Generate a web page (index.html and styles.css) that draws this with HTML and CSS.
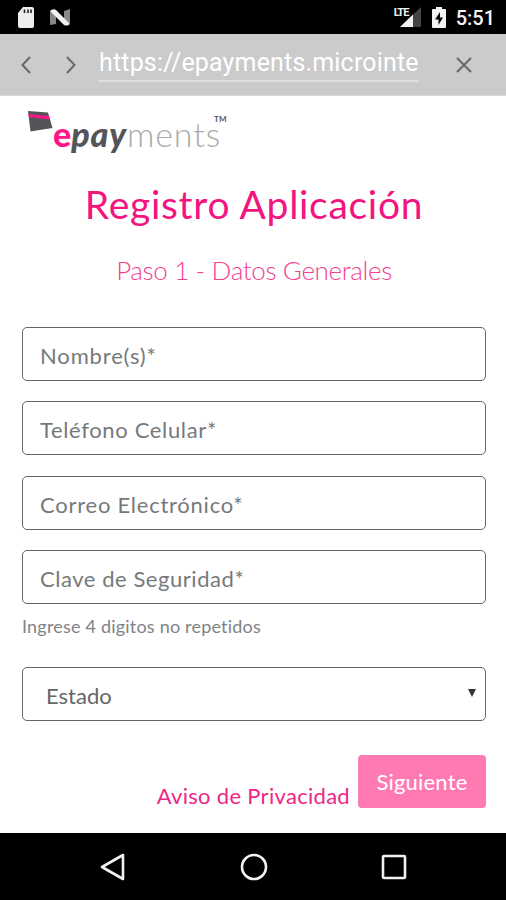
FILE: index.html
```
<!DOCTYPE html>
<html lang="es">
<head>
    <meta charset="UTF-8">
    <title>Registro Aplicación</title>
    <link rel="stylesheet" href="styles.css">
</head>
<body>
    <div class="status-bar">
        <svg class="sd" width="17" height="22" viewBox="0 0 17 22">
            <path d="M6 0h9q2 0 2 2v17q0 2-2 2H3q-2 0-2-2V6z" fill="#ededed"/>
            <path d="M7.500 2.500V6M11 2.500V6M14 2.500V6" stroke="#222" stroke-width="1.600"/>
        </svg>
        <svg class="nougat" width="21" height="18" viewBox="0 0 21 18">
            <path d="M0 2l6 2v11l-6 1zM14 2l6-2v14l-6 1z" fill="#888"/>
            <path d="M0 2q3-3 6-1l14 14q-3 2.500-6 1z" fill="#f2f2f2"/>
        </svg>
        <div class="status-right">
            <span class="lte">LTE</span>
            <svg class="signal" width="21" height="20" viewBox="0 0 21 20">
                <path d="M21 0v20H0z" fill="#444"/>
                <path d="M13 7.500V20H0z" fill="#f2f2f2"/>
            </svg>
            <svg class="battery" width="14" height="21" viewBox="0 0 14 21">
                <path d="M4 0h6v2h3q1 0 1 1v17q0 1-1 1H1q-1 0-1-1V3q0-1 1-1h3z" fill="#f2f2f2"/>
                <path d="M8 5L3 12.500h3.500V18L11 10.500H8z" fill="#000"/>
            </svg>
            <span class="clock">5:51</span>
        </div>
    </div>

    <div class="browser-bar">
        <svg class="back" width="10" height="18" viewBox="0 0 10 18"><path d="M9 1L1.500 9 9 17"/></svg>
        <svg class="forward" width="10" height="18" viewBox="0 0 10 18"><path d="M1 1l7.500 8L1 17"/></svg>
        <div class="url">https://epayments.microinte</div>
        <svg class="close" width="16" height="16" viewBox="0 0 16 16"><path d="M1 1l14 14M15 1L1 15"/></svg>
    </div>

    <div class="page">
        <div class="logo">
            <svg width="25" height="23" viewBox="0 0 25 23">
                <path d="M0 1L20 2.500l4.500 15.500L2.500 21.500z" fill="#555459"/>
                <path d="M.3 4L21 6l.8 3.500L.8 7z" fill="#ff1585"/>
            </svg>
            <span class="logo-e">e</span><span class="logo-pay">pay</span><span class="logo-ments">ments</span><span class="logo-tm">TM</span>
        </div>
        <h1>Registro Aplicación</h1>
        <h2>Paso 1 - Datos Generales</h2>
        <form>
            <input class="field nombre" type="text" placeholder="Nombre(s)*">
            <input class="field telefono" type="text" placeholder="Teléfono Celular*">
            <input class="field correo" type="text" placeholder="Correo Electrónico*">
            <input class="field clave" type="text" placeholder="Clave de Seguridad*">
            <small>Ingrese 4 digitos no repetidos</small>
            <div class="field select">
                <span>Estado</span>
                <svg width="8" height="8" viewBox="0 0 8 8"><path d="M0 0h8L4 8z" fill="#333"/></svg>
            </div>
            <div class="actions">
                <a class="aviso">Aviso de Privacidad</a>
                <button type="button">Siguiente</button>
            </div>
        </form>
    </div>

    <div class="nav-bar">
        <svg width="26" height="30" viewBox="0 0 26 30"><path d="M23 3v24L2 15z"/></svg>
        <svg width="28" height="28" viewBox="0 0 28 28"><circle cx="14" cy="14" r="12"/></svg>
        <svg width="26" height="26" viewBox="0 0 26 26"><rect x="2" y="2" width="22" height="22" rx="1"/></svg>
    </div>
</body>
</html>
```

FILE: styles.css
```
* {
    box-sizing: border-box;
}
body {
    margin: 0;
    width: 506px;
    height: 900px;
    display: flex;
    flex-direction: column;
    background: #fff;
    font-family: Lato, sans-serif;
    font-variant-ligatures: none;
    overflow: hidden;
}
svg {
    display: block;
    flex: none;
}
.status-bar {
    height: 34px;
    flex: none;
    background: #000;
    display: flex;
    align-items: flex-start;
    padding: 7px 11px 0 17px;
    font-family: Roboto, sans-serif;
    color: #f2f2f2;
}
.nougat {
    margin: 2px 0 0 16px;
}
.status-right {
    margin-left: auto;
    display: flex;
}
.lte {
    font-size: 11px;
    font-weight: 700;
    line-height: 11px;
    letter-spacing: -1px;
    width: 14px;
    margin-right: -8px;
    z-index: 1;
}
.battery {
    margin-left: 11px;
}
.clock {
    font-size: 20px;
    font-weight: 500;
    line-height: 22px;
    margin-left: 10px;
}
.browser-bar {
    height: 62px;
    flex: none;
    background: #cbcbcb;
    border-bottom: 1px solid #d8d8d8;
    display: flex;
    align-items: center;
    padding: 0 34px 0 21px;
}
.browser-bar svg {
    fill: none;
    stroke: #686868;
    stroke-width: 2;
}
.forward {
    margin-left: 35px;
}
.url {
    width: 320px;
    height: 36px;
    margin: 0 0 1px 23px;
    border-bottom: 2px solid #dedede;
    font: 25px/34px Roboto, sans-serif;
    letter-spacing: 0.17px;
    color: #fff;
    white-space: nowrap;
}
.close {
    margin-left: auto;
}
.page {
    height: 737px;
    flex: none;
    padding: 14px 20px 0 22px;
}
.logo {
    height: 50px;
    display: flex;
    align-items: flex-start;
    padding-left: 6px;
    line-height: 48px;
    font-size: 34px;
}
.logo-e {
    font-weight: 900;
    color: #ff1585;
}
.logo-pay {
    font-weight: 900;
    font-style: italic;
    letter-spacing: 0.8px;
    color: #555459;
}
.logo-ments {
    font-weight: 300;
    letter-spacing: 0.9px;
    color: #aaa;
}
.logo-tm {
    font-size: 8px;
    font-weight: 700;
    line-height: 18px;
    color: #555;
    margin-left: -7px;
}
h1 {
    margin: 20px 0 0;
    text-align: center;
    font-size: 39px;
    line-height: 48px;
    font-weight: 400;
    letter-spacing: 0.7px;
    color: #f3147f;
}
h2 {
    margin: 26px 0 0;
    text-align: center;
    font-size: 26px;
    line-height: 32px;
    font-weight: 300;
    letter-spacing: -0.35px;
    color: #f3408f;
}
form {
    margin-top: 40.5px;
    display: flex;
    flex-direction: column;
}
.field {
    width: 464px;
    height: 54px;
    border: 1.5px solid #666;
    border-radius: 5px;
    padding: 3px 17px 0;
    margin-bottom: 20.6px;
    font-family: inherit;
    font-size: 22px;
    color: #76797c;
    background: #fff;
}
.field::placeholder {
    color: #76797c;
    opacity: 1;
}
.nombre {
    letter-spacing: 0.85px;
}
.telefono {
    letter-spacing: 0.65px;
}
.correo {
    letter-spacing: 0.75px;
}
.clave {
    letter-spacing: 0.55px;
}
small {
    margin-top: -11px;
    font-size: 18px;
    line-height: 24px;
    letter-spacing: 0.2px;
    color: #808386;
}
.select {
    margin: 29px 0 34px;
    padding: 3px 9px 0 23px;
    display: flex;
    align-items: center;
    justify-content: space-between;
    color: #666;
}
.select svg {
    margin-bottom: 5px;
}
.actions {
    display: flex;
    justify-content: flex-end;
    align-items: flex-start;
}
.aviso {
    font-size: 22px;
    line-height: 28px;
    letter-spacing: 0.3px;
    margin: 27px 8px 0 0;
    color: #ee2587;
}
button {
    width: 128px;
    height: 53px;
    border: none;
    border-radius: 4px;
    padding: 0;
    background: #ff7ab3;
    color: #fff;
    font-family: inherit;
    font-size: 22px;
    letter-spacing: 0.2px;
}
.nav-bar {
    flex: 1;
    background: #000;
    display: flex;
    align-items: center;
    justify-content: space-between;
    padding: 0 99px 0 100px;
}
.nav-bar svg {
    fill: none;
    stroke: #f2f2f2;
    stroke-width: 2.6;
    stroke-linejoin: round;
}
```
